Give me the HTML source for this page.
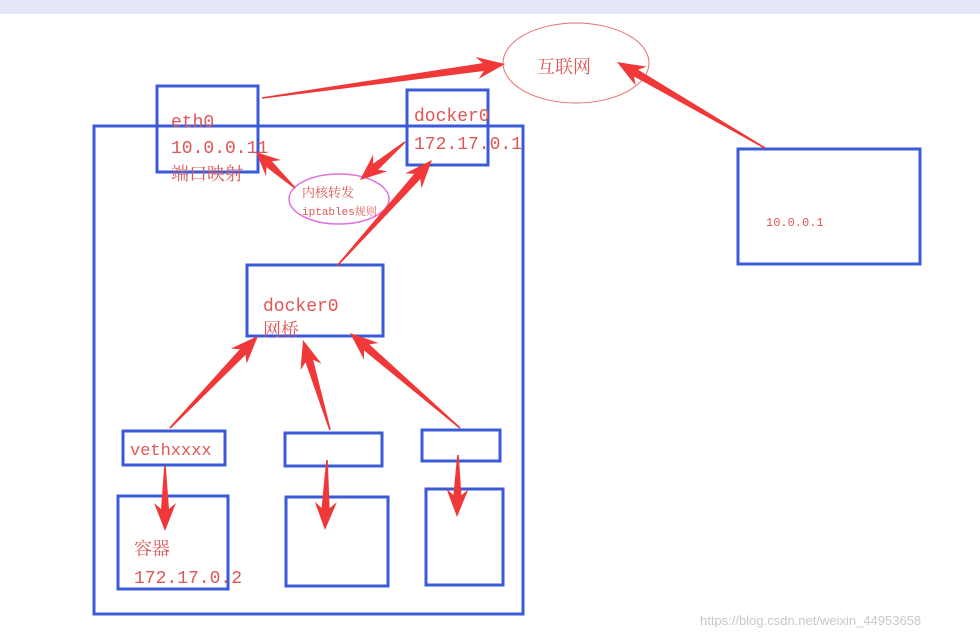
<!DOCTYPE html>
<html><head><meta charset="utf-8"><style>
html,body{margin:0;padding:0;background:#fff;}
svg{display:block}
text{font-family:"Liberation Mono","Noto Serif CJK SC","Noto Sans CJK SC",monospace;fill:#e05555}
</style></head><body>
<svg id="s" width="980" height="636" viewBox="0 0 980 636" xmlns="http://www.w3.org/2000/svg">
<rect x="0" y="0" width="980" height="14" fill="#e6e8fa"/>
<g fill="none" stroke="#3a5ad8" stroke-width="3">
<rect x="94" y="126" width="429" height="488"/>
<rect x="157" y="86" width="101" height="86"/>
<rect x="407" y="90" width="81" height="75"/>
<rect x="247" y="265" width="136" height="71"/>
<rect x="123" y="431" width="102" height="34"/>
<rect x="285" y="433" width="97" height="33"/>
<rect x="422" y="430" width="78" height="31"/>
<rect x="118" y="496" width="110" height="93"/>
<rect x="286" y="497" width="102" height="89"/>
<rect x="426" y="489" width="77" height="96"/>
<rect x="738" y="149" width="182" height="115"/>
</g>
<ellipse cx="576" cy="63" rx="73" ry="40" fill="none" stroke="#e87070" stroke-width="1"/>
<ellipse cx="339" cy="199" rx="50" ry="25" fill="#fff" stroke="#e070e0" stroke-width="1.5"/>
<g id="arrows" fill="#f03838"></g>
<text x="537" y="73" font-size="18">互联网</text>
<text x="171" y="127" font-size="18">eth0</text>
<text x="171" y="153" font-size="18">10.0.0.11</text>
<text x="171" y="180" font-size="18">端口映射</text>
<text x="414" y="121" font-size="18">docker0</text>
<text x="414" y="149" font-size="18">172.17.0.1</text>
<text x="302" y="197" font-size="13">内核转发</text>
<text x="302" y="215" font-size="11">iptables规则</text>
<text x="263" y="311" font-size="18">docker0</text>
<text x="263" y="336" font-size="18">网桥</text>
<text x="130" y="455" font-size="17">vethxxxx</text>
<text x="134" y="555" font-size="18">容器</text>
<text x="134" y="583" font-size="18">172.17.0.2</text>
<text x="766" y="226" font-size="12">10.0.0.1</text>
<text x="700" y="625" font-size="13" style="fill:#c8c8c8;font-family:'Liberation Sans',sans-serif">https://blog.csdn.net/weixin_44953658</text>
</svg>
<script>
var A=[[262,98,505,64],[765,148,617,62],[295,188,256,152],[405,142,360,180],[337,266,432,160],[170,428,258,336],[330,430,303,340],[460,428,350,333],[165,466,165,531],[327,460,325,530],[458,455,457,517]];
var g=document.getElementById('arrows'),s='';
A.forEach(function(a){var x1=a[0],y1=a[1],x2=a[2],y2=a[3],dx=x2-x1,dy=y2-y1,L=Math.hypot(dx,dy),ux=dx/L,uy=dy/L,px=-uy,py=ux;
var hl=Math.min(28,L*0.45),hw=11,sw=4,tw=0.8;
var bx=x2-ux*hl,by=y2-uy*hl,nx=x2-ux*(hl-6),ny=y2-uy*(hl-6);
var p=[[x1+px*tw,y1+py*tw],[nx+px*sw,ny+py*sw],[bx+px*hw,by+py*hw],[x2,y2],[bx-px*hw,by-py*hw],[nx-px*sw,ny-py*sw],[x1-px*tw,y1-py*tw]];
s+='<polygon points="'+p.map(function(q){return q[0].toFixed(1)+','+q[1].toFixed(1)}).join(' ')+'"/>';});
g.innerHTML=s;
</script>
</body></html>
